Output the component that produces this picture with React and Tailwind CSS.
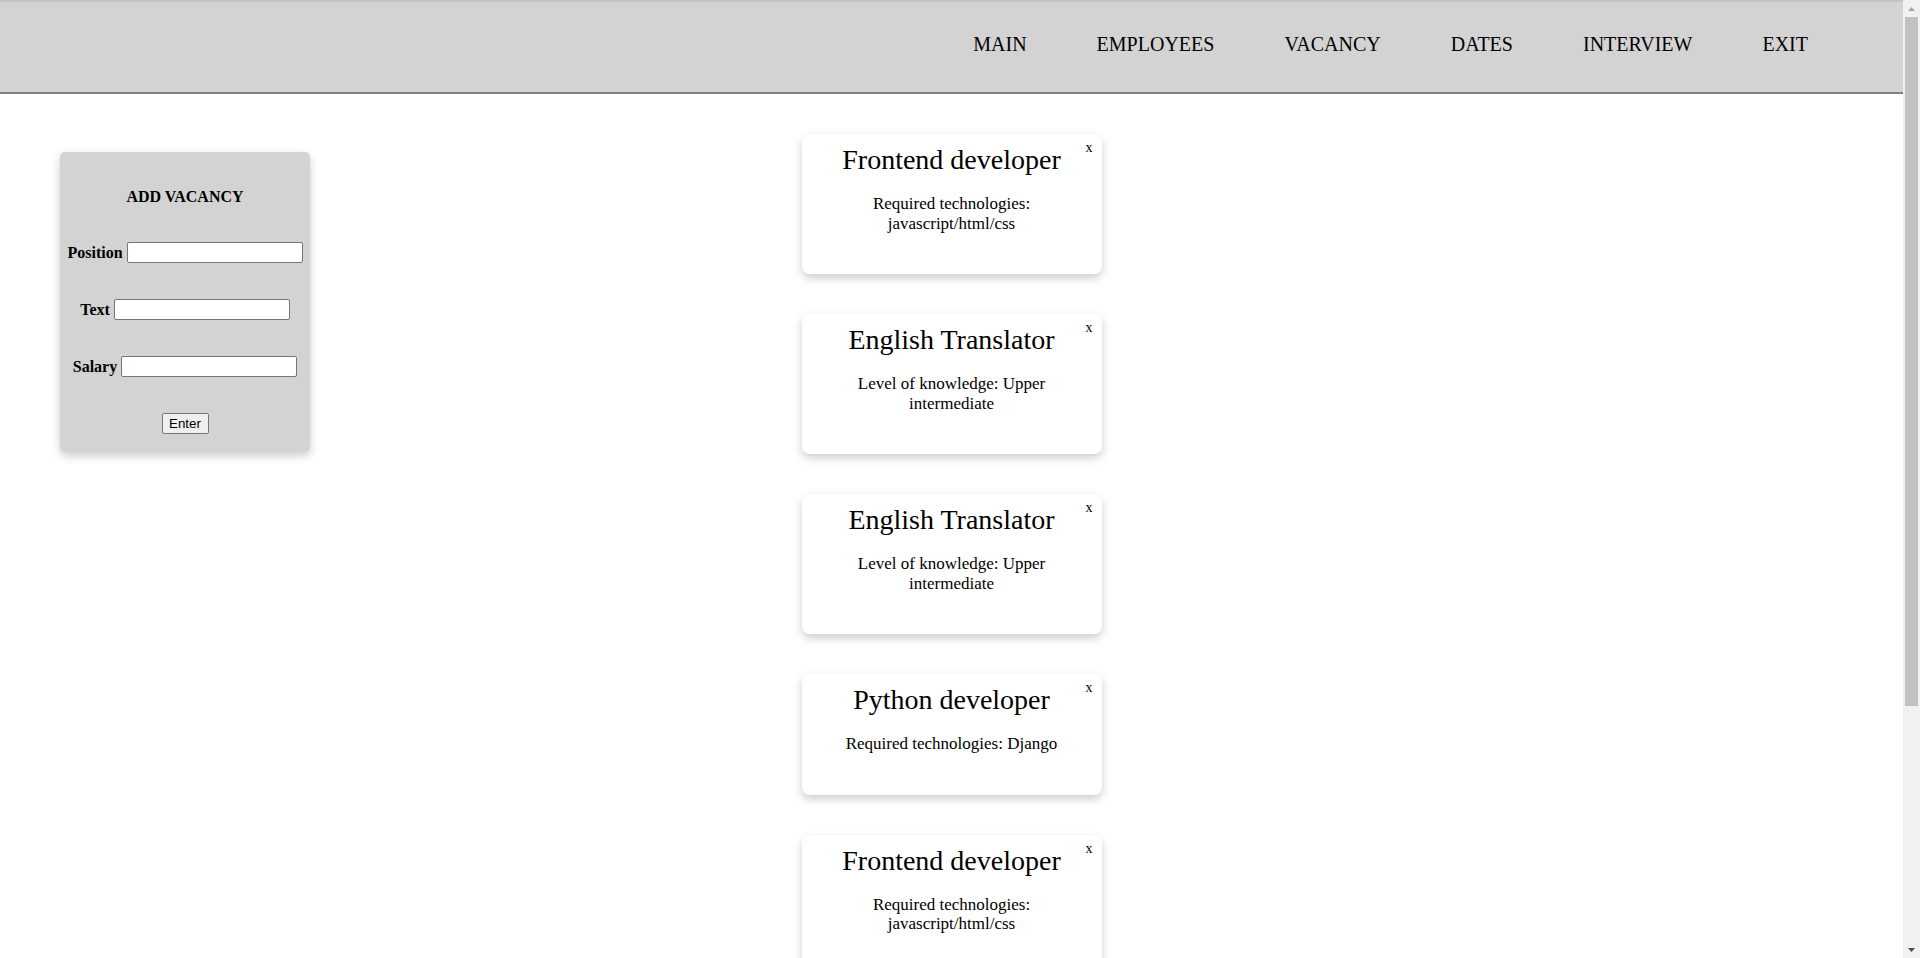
import React from 'react'

const navItems = ['MAIN', 'EMPLOYEES', 'VACANCY', 'DATES', 'INTERVIEW', 'EXIT']

const vacancies = [
  { id: 1, position: 'Frontend developer', text: 'Required technologies: javascript/html/css' },
  { id: 2, position: 'English Translator', text: 'Level of knowledge: Upper intermediate' },
  { id: 3, position: 'English Translator', text: 'Level of knowledge: Upper intermediate' },
  { id: 4, position: 'Python developer', text: 'Required technologies: Django' },
  { id: 5, position: 'Frontend developer', text: 'Required technologies: javascript/html/css' },
  { id: 6, position: 'Python developer', text: 'Required technologies: Django' },
]

const Field = ({ label }) => (
  <div className="flex h-[21px] items-center justify-center gap-[4px]">
    <label className="text-[16px] font-bold leading-[18px]">{label}</label>
    <input
      type="text"
      className="h-[21px] w-[176px] rounded-[2px] border border-[#767676] bg-white px-[2px] font-['Liberation_Sans',sans-serif] text-[13.33px] outline-none"
    />
  </div>
)

const VacancyCard = ({ vacancy }) => (
  <div className="relative rounded-[8px] bg-white px-[20px] pt-[10px] pb-[41px] text-center shadow-[0_4px_10px_0_rgba(0,0,0,0.2)]">
    <span className="absolute top-[6px] right-[9px] cursor-pointer text-[14px] leading-[16px]">x</span>
    <h2 className="text-[28px] font-normal leading-[32px]">{vacancy.position}</h2>
    <p className="mt-[18px] text-[17px] leading-[19.5px]">{vacancy.text}</p>
  </div>
)

const Scrollbar = () => (
  <div className="flex h-full w-[17px] shrink-0 flex-col bg-[#f1f1f1]">
    <div className="flex h-[17px] items-center justify-center">
      <svg width="7" height="4" viewBox="0 0 7 4">
        <polygon points="3.5,0 7,4 0,4" fill="#a3a3a3" />
      </svg>
    </div>
    <div className="mx-[2px] h-[689px] bg-[#c1c1c1]" />
    <div className="flex-1" />
    <div className="flex h-[17px] items-center justify-center">
      <svg width="7" height="4" viewBox="0 0 7 4">
        <polygon points="0,0 7,0 3.5,4" fill="#505050" />
      </svg>
    </div>
  </div>
)

const App = () => {
  return (
    <div className="flex h-[958px] w-full overflow-hidden bg-white font-['Liberation_Serif',serif] text-black">
      <div className="flex min-w-0 flex-1 flex-col">
        {/* Header */}
        <header className="flex h-[94px] shrink-0 justify-end border-t-2 border-b-2 border-t-[#c3c3c3] border-b-[#808080] bg-[#d3d3d3] pt-[31px] pr-[95px]">
          <nav className="flex h-[23px] gap-[70px] text-[20px] leading-[23px]">
            {navItems.map((item) => (
              <a key={item} className="cursor-pointer">{item}</a>
            ))}
          </nav>
        </header>

        <main className="grid grid-cols-[1fr_300px_1fr]">
          {/* Add vacancy form */}
          <div>
            <form className="mt-[58px] ml-[60px] flex w-[250px] flex-col gap-[36px] rounded-[5px] bg-[#d3d3d3] pt-[36px] pb-[18px] shadow-[0_4px_10px_0_rgba(0,0,0,0.2)]">
              <h3 className="text-center text-[16px] font-bold leading-[18px]">ADD VACANCY</h3>
              <Field label="Position" />
              <Field label="Text" />
              <Field label="Salary" />
              <div className="flex h-[21px] justify-center">
                <button
                  type="button"
                  className="h-[21px] w-[47px] rounded-[2px] border border-[#767676] bg-[#efefef] font-['Liberation_Sans',sans-serif] text-[13.33px] leading-[15px]"
                >
                  Enter
                </button>
              </div>
            </form>
          </div>

          {/* Vacancy list */}
          <div className="flex flex-col gap-[40px] pt-[40px] pb-[40px]">
            {vacancies.map((vacancy) => (
              <VacancyCard key={vacancy.id} vacancy={vacancy} />
            ))}
          </div>

          <div />
        </main>
      </div>
      <Scrollbar />
    </div>
  )
}

export default App
